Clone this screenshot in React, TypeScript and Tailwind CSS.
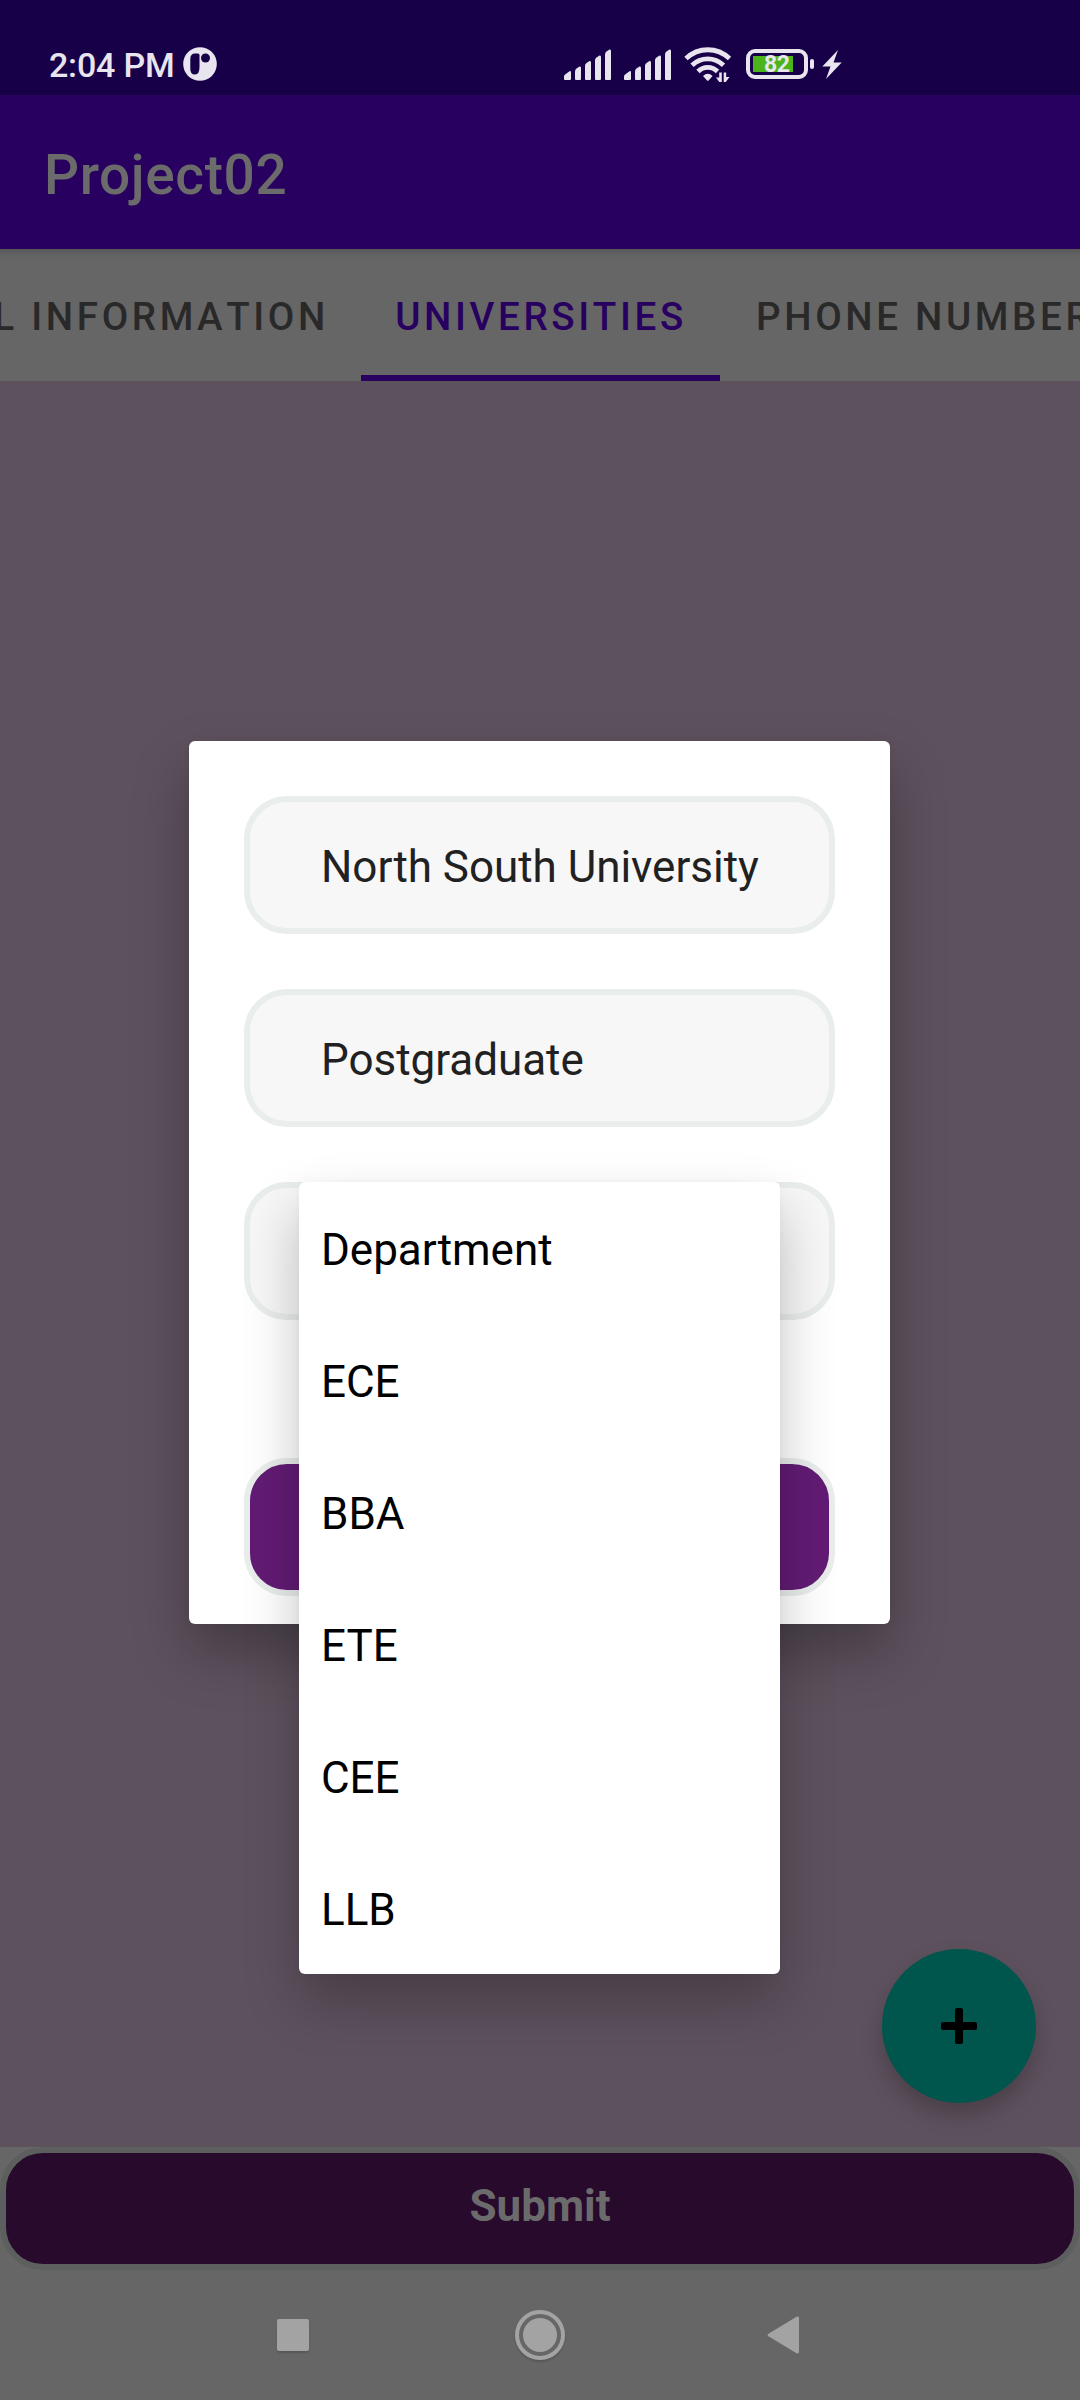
const departments = ["Department", "ECE", "BBA", "ETE", "CEE", "LLB"];

function SignalIcon() {
  return (
    <svg className="h-9 w-[50px]" viewBox="0 0 50 36" fill="#e8e5ef">
      <path d="M1 33V30.500Q1 29 2.400 28.200L6.500 25.300Q8 24.500 8 26.500V33Q8 34 7 34H2Q1 34 1 33Z" />
      <path d="M12 33V25.500Q12 23.500 13.500 22.500L16.500 20.500Q18 20 18 22V33Q18 34 17 34H13Q12 34 12 33Z" />
      <path d="M22 33V19.500Q22 18 23.500 17L26.500 15Q28 14.500 28 16.500V33Q28 34 27 34H23Q22 34 22 33Z" />
      <path d="M32 33V14Q32 12.500 33.500 11.500L36.500 9.500Q38 9 38 11V33Q38 34 37 34H33Q32 34 32 33Z" />
      <path d="M42 33V8.500Q42 6.500 43.500 5.500L46.500 3.500Q48 3 48 5V33Q48 34 47 34H43Q42 34 42 33Z" />
    </svg>
  );
}

function WifiIcon() {
  return (
    <svg className="h-[38px] w-[48px]" viewBox="0 0 48 38" fill="none" stroke="#e8e5ef" strokeWidth="4.800">
      <path d="M2 12.500C14.500 .8 33 .8 45.500 12.500" />
      <path d="M8 19.200C17 10.800 30.500 10.800 39.500 19.200" />
      <path d="M14 25.500C19.500 20 28 20 33.500 25.500" />
      <path d="M19 30Q23.800 25.500 28.600 30L24.800 34.300Q23.800 35.300 22.800 34.300Z" fill="#e8e5ef" stroke="none" />
      <path d="M35.200 26.500H37.800V36H35.300L32 31.500H35.200ZM39.700 26.500H42.200V31H45.500L41.800 36H39.700Z" fill="#e8e5ef" stroke="none" />
    </svg>
  );
}

function StatusBar() {
  return (
    <header className="flex h-[95px] items-start bg-[#170048] pl-[49px]">
      <span className="mt-[45px] w-[134px] text-[34px] leading-[40px] font-medium tracking-[-0.2px] whitespace-nowrap text-[#e8e5ef]">2:04 PM</span>
      <svg className="mt-[47px] h-[34px] w-[34px]" viewBox="0 0 34 34">
        <circle cx="17" cy="17" r="16.800" fill="#e8e5ef" />
        <path d="M12 6.500H15Q16.500 6.500 16.500 8V20Q16.500 27.500 12 27.500Q7.300 27.500 7.300 22V12Q7.300 6.500 12 6.500Z" fill="#170048" />
        <circle cx="22.500" cy="11" r="4.500" fill="#170048" />
      </svg>
      <div className="mt-[46px] ml-[346px] flex">
        <SignalIcon />
        <div className="ml-[10px]"><SignalIcon /></div>
        <div className="ml-[11px]"><WifiIcon /></div>
        <div className="relative mt-[3px] ml-[14px] h-[30px] w-[62px] rounded-[9px] border-4 border-[#e8e5ef]">
          <div className="mt-[3px] ml-[3px] h-4 w-10 bg-[#4cb41b]" />
          <span className="absolute top-0 left-[14px] text-[23px] leading-[24px] font-bold tracking-[-0.5px] text-[#e8e5ef]">82</span>
        </div>
        <div className="mt-[13px] ml-[2px] h-[10px] w-1 rounded-sm bg-[#e8e5ef]" />
        <svg className="mt-[3px] ml-[8px] h-[31px] w-[20px]" viewBox="0 0 20 31" fill="#e8e5ef">
          <path d="M16 1L.3 17.500H8.500L4 30L19.700 13.500H11.500Z" />
        </svg>
      </div>
    </header>
  );
}

function Tabs() {
  return (
    <nav className="relative flex h-[132px] w-full justify-center overflow-hidden bg-[#666666] text-[38.500px] font-medium tracking-[3.650px] whitespace-nowrap text-[#292929] shadow-[inset_0_12px_10px_-10px_rgba(0,0,0,0.2)] [font-kerning:none]">
      <div className="flex w-[361px] shrink-0 items-center justify-end pt-[3px] pr-[32px]">PERSONAL INFORMATION</div>
      <div className="flex w-[359px] shrink-0 items-center justify-center border-b-[6px] border-[#270060] pt-[9px] pl-px text-[#270060]">UNIVERSITIES</div>
      <div className="flex w-[360px] shrink-0 items-center pt-[3px] pl-[36px]">PHONE NUMBER</div>
    </nav>
  );
}

function Field({ value }: { value: string }) {
  return (
    <div className="flex h-[138px] shrink-0 items-center rounded-[43px] border-6 border-[#e9edec] bg-[#f7f7f7] pt-[4px] pl-[71px] text-[44px] tracking-[-0.03px] whitespace-nowrap text-[#212121]">
      {value}
    </div>
  );
}

function DepartmentMenu() {
  return (
    <ul className="absolute top-0 left-[55px] w-[481px] rounded-[6px] bg-white shadow-[0_28px_56px_rgba(0,0,0,0.24),0_0_10px_rgba(0,0,0,0.03)]">
      {departments.map((name) => (
        <li key={name} className="flex h-[132px] items-center pt-[3px] pl-[22px] text-[44px] tracking-[-0.03px] text-black">
          {name}
        </li>
      ))}
    </ul>
  );
}

function UniversityDialog() {
  return (
    <section className="absolute top-[741px] left-[189px] flex h-[883px] w-[701px] flex-col gap-[55px] rounded-[6px] bg-white p-[55px] shadow-[0_28px_56px_rgba(0,0,0,0.28),0_0_10px_rgba(0,0,0,0.03)]">
      <Field value="North South University" />
      <Field value="Postgraduate" />
      <div className="relative z-10 shrink-0">
        <Field value="" />
        <DepartmentMenu />
      </div>
      <div className="mt-[83px] h-[138px] shrink-0 rounded-[43px] border-6 border-[#e9edec] bg-[#621b74]" />
    </section>
  );
}

export default function App() {
  return (
    <div className="relative flex h-[2400px] w-[1080px] flex-col overflow-hidden bg-[#666666] font-['Roboto',sans-serif]">
      <StatusBar />
      <div className="flex h-[154px] items-center bg-[#270060] pt-[7px] pl-[44px] text-[55px] font-medium tracking-[0.6px] text-[#6b6b6b]">Project02</div>
      <Tabs />
      <main className="flex flex-1 items-end justify-end bg-[#5d515d] pr-[44px] pb-[44px]">
        <button className="flex h-[154px] w-[154px] items-center justify-center rounded-full bg-[#00564d] shadow-[0_12px_22px_rgba(0,0,0,0.22)]">
          <svg className="h-9 w-9" viewBox="0 0 36 36">
            <rect x="14" width="8" height="36" rx="2" />
            <rect y="14" width="36" height="8" rx="2" />
          </svg>
        </button>
      </main>
      <button className="h-[123px] shrink-0 rounded-[43px] border-6 border-[#5d5f5e] bg-[#280a2d] pb-[5px] text-[44px] font-bold text-[#6b6b6b]">Submit</button>
      <footer className="flex h-[130px] shrink-0 items-center pl-[277px]">
        <div className="h-8 w-8 rounded-[2px] bg-[#a3a3a3] shadow-[0_2px_2px_rgba(0,0,0,0.15)]" />
        <div className="ml-[206px] flex h-[50px] w-[50px] items-center justify-center rounded-full border-4 border-[#a3a3a3] shadow-[0_2px_2px_rgba(0,0,0,0.15)]">
          <div className="h-[34px] w-[34px] shrink-0 rounded-full bg-[#a3a3a3]" />
        </div>
        <svg className="ml-[202px] h-[38px] w-8" viewBox="0 0 32 38" fill="#a3a3a3">
          <path d="M1.500 17.800L29.500 .8Q32 0 32 2V36Q32 38 29.500 37.200L1.500 20.200Q-.3 19 1.500 17.800Z" />
        </svg>
      </footer>
      <UniversityDialog />
    </div>
  );
}
